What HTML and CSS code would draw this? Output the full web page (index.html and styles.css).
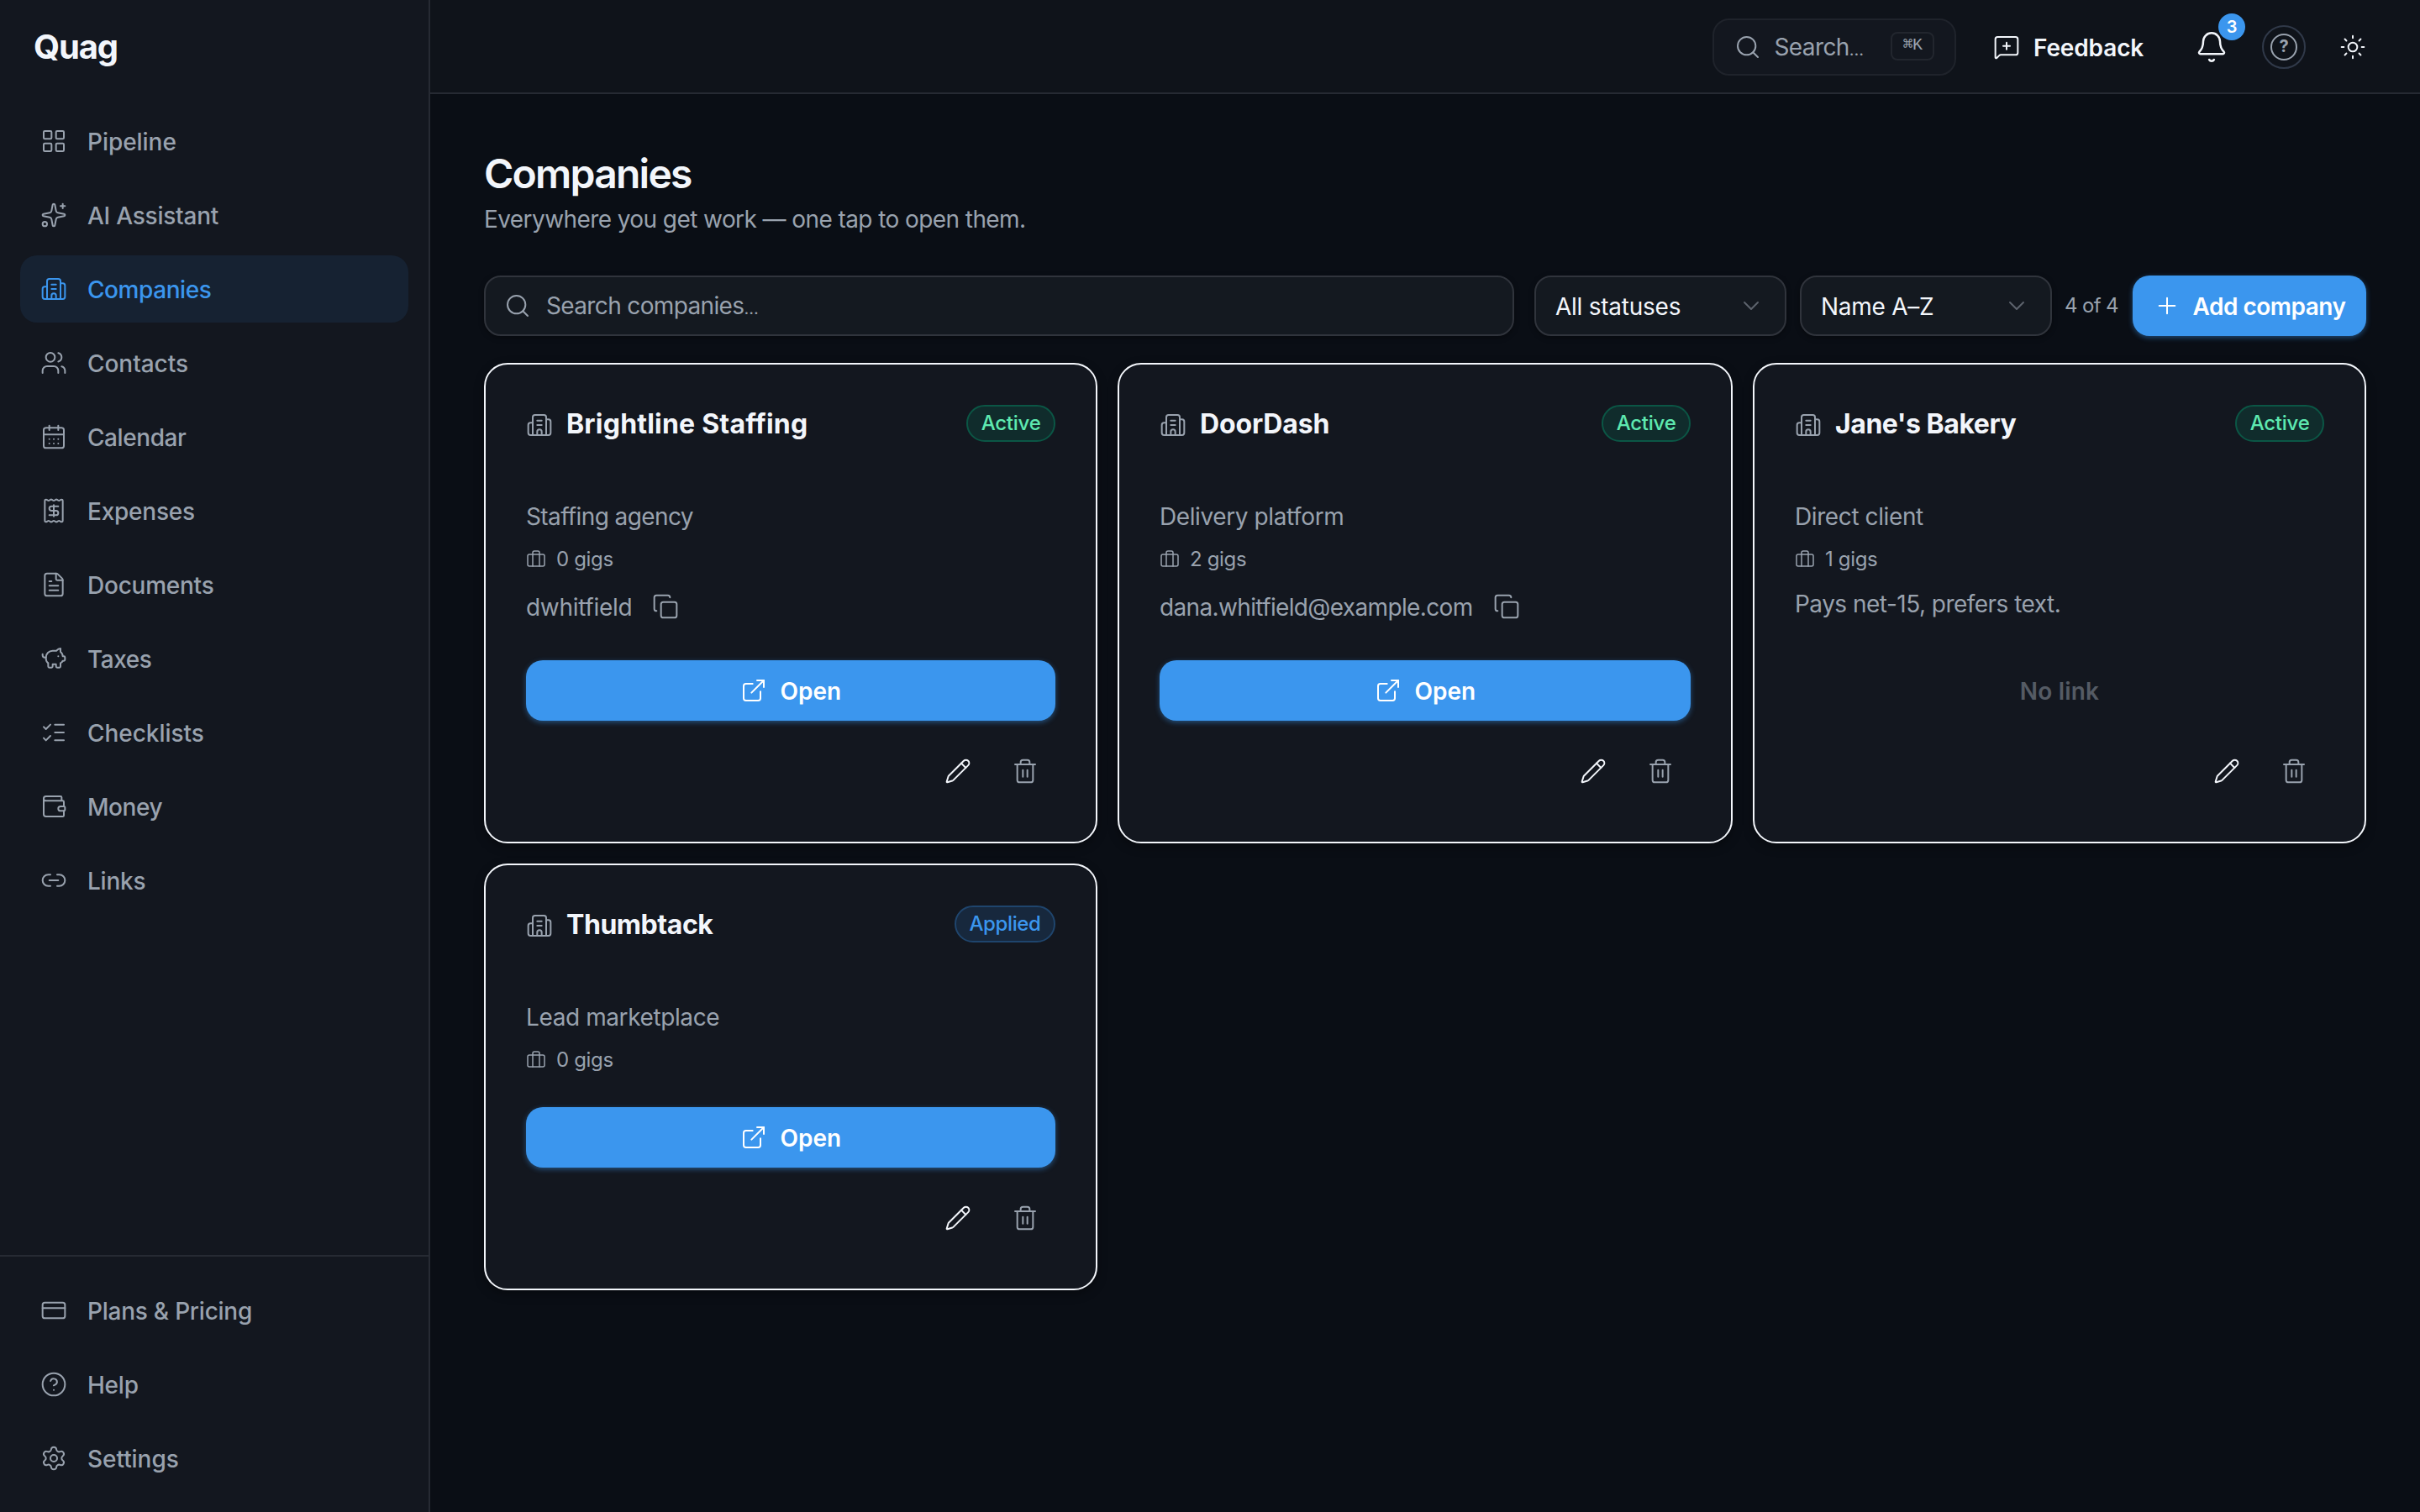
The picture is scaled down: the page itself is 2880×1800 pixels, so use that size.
FILE: index.html
```html
<!DOCTYPE html>
<html lang="en">
<head>
<meta charset="utf-8">
<title>Companies · Quag</title>
<link rel="stylesheet" href="styles.css">
</head>
<body>
<svg class="sprite" width="0" height="0" aria-hidden="true">
  <symbol id="grid" viewBox="0 0 24 24"><rect width="7" height="7" x="3" y="3" rx="1"/><rect width="7" height="7" x="14" y="3" rx="1"/><rect width="7" height="7" x="14" y="14" rx="1"/><rect width="7" height="7" x="3" y="14" rx="1"/></symbol>
  <symbol id="sparkles" viewBox="0 0 24 24"><path d="M11.017 2.814a1 1 0 0 1 1.966 0l1.051 5.558a2 2 0 0 0 1.594 1.594l5.558 1.051a1 1 0 0 1 0 1.966l-5.558 1.051a2 2 0 0 0-1.594 1.594l-1.051 5.558a1 1 0 0 1-1.966 0l-1.051-5.558a2 2 0 0 0-1.594-1.594l-5.558-1.051a1 1 0 0 1 0-1.966l5.558-1.051a2 2 0 0 0 1.594-1.594z"/><path d="M20 2v4"/><path d="M22 4h-4"/><circle cx="4" cy="20" r="2"/></symbol>
  <symbol id="building" viewBox="0 0 24 24"><path d="M10 12h4"/><path d="M10 8h4"/><path d="M14 21v-3a2 2 0 0 0-4 0v3"/><path d="M6 10H4a2 2 0 0 0-2 2v7a2 2 0 0 0 2 2h16a2 2 0 0 0 2-2V9a2 2 0 0 0-2-2h-2"/><path d="M6 21V5a2 2 0 0 1 2-2h8a2 2 0 0 1 2 2v16"/></symbol>
  <symbol id="users" viewBox="0 0 24 24"><path d="M16 21v-2a4 4 0 0 0-4-4H6a4 4 0 0 0-4 4v2"/><path d="M16 3.128a4 4 0 0 1 0 7.744"/><path d="M22 21v-2a4 4 0 0 0-3-3.87"/><circle cx="9" cy="7" r="4"/></symbol>
  <symbol id="calendar" viewBox="0 0 24 24"><path d="M8 2v4"/><path d="M16 2v4"/><rect width="18" height="18" x="3" y="4" rx="2"/><path d="M3 10h18"/><path d="M8 14h.01"/><path d="M12 14h.01"/><path d="M16 14h.01"/><path d="M8 18h.01"/><path d="M12 18h.01"/><path d="M16 18h.01"/></symbol>
  <symbol id="receipt" viewBox="0 0 24 24"><path d="M12 17V7"/><path d="M16 8h-6a2 2 0 0 0 0 4h4a2 2 0 0 1 0 4H8"/><path d="M4 3a1 1 0 0 1 1-1 1.3 1.3 0 0 1 .7.2l.933.6a1.3 1.3 0 0 0 1.4 0l.934-.6a1.3 1.3 0 0 1 1.4 0l.933.6a1.3 1.3 0 0 0 1.4 0l.933-.6a1.3 1.3 0 0 1 1.4 0l.934.6a1.3 1.3 0 0 0 1.4 0l.933-.6A1.3 1.3 0 0 1 19 2a1 1 0 0 1 1 1v18a1 1 0 0 1-1 1 1.3 1.3 0 0 1-.7-.2l-.933-.6a1.3 1.3 0 0 0-1.4 0l-.934.6a1.3 1.3 0 0 1-1.4 0l-.933-.6a1.3 1.3 0 0 0-1.4 0l-.933.6a1.3 1.3 0 0 1-1.4 0l-.934-.6a1.3 1.3 0 0 0-1.4 0l-.933.6a1.3 1.3 0 0 1-.7.2 1 1 0 0 1-1-1z"/></symbol>
  <symbol id="file" viewBox="0 0 24 24"><path d="M6 22a2 2 0 0 1-2-2V4a2 2 0 0 1 2-2h8a2.4 2.4 0 0 1 1.704.706l3.588 3.588A2.4 2.4 0 0 1 20 8v12a2 2 0 0 1-2 2z"/><path d="M14 2v5a1 1 0 0 0 1 1h5"/><path d="M10 9H8"/><path d="M16 13H8"/><path d="M16 17H8"/></symbol>
  <symbol id="piggy" viewBox="0 0 24 24"><path d="M11 17h3v2a1 1 0 0 0 1 1h2a1 1 0 0 0 1-1v-3a3.16 3.16 0 0 0 2-2h1a1 1 0 0 0 1-1v-2a1 1 0 0 0-1-1h-1a5 5 0 0 0-2-4V3a4 4 0 0 0-3.2 1.6l-.3.4H11a6 6 0 0 0-6 6v1a5 5 0 0 0 2 4v3a1 1 0 0 0 1 1h2a1 1 0 0 0 1-1z"/><path d="M16 10h.01"/><path d="M2 8v1a2 2 0 0 0 2 2h1"/></symbol>
  <symbol id="checks" viewBox="0 0 24 24"><path d="M13 5h8"/><path d="M13 12h8"/><path d="M13 19h8"/><path d="m3 17 2 2 4-4"/><path d="m3 7 2 2 4-4"/></symbol>
  <symbol id="wallet" viewBox="0 0 24 24"><path d="M19 7V4a1 1 0 0 0-1-1H5a2 2 0 0 0 0 4h15a1 1 0 0 1 1 1v4h-3a2 2 0 0 0 0 4h3a1 1 0 0 0 1-1v-2a1 1 0 0 0-1-1"/><path d="M3 5v14a2 2 0 0 0 2 2h15a1 1 0 0 0 1-1v-4"/></symbol>
  <symbol id="link" viewBox="0 0 24 24"><path d="M9 17H7A5 5 0 0 1 7 7h2"/><path d="M15 7h2a5 5 0 1 1 0 10h-2"/><path d="M8 12h8"/></symbol>
  <symbol id="card" viewBox="0 0 24 24"><rect width="20" height="14" x="2" y="5" rx="2"/><path d="M2 10h20"/></symbol>
  <symbol id="help" viewBox="0 0 24 24"><circle cx="12" cy="12" r="10"/><path d="M9.09 9a3 3 0 0 1 5.83 1c0 2-3 3-3 3"/><path d="M12 17h.01"/></symbol>
  <symbol id="gear" viewBox="0 0 24 24"><path d="M9.671 4.136a2.34 2.34 0 0 1 4.659 0 2.34 2.34 0 0 0 3.319 1.915 2.34 2.34 0 0 1 2.33 4.033 2.34 2.34 0 0 0 0 3.831 2.34 2.34 0 0 1-2.33 4.033 2.34 2.34 0 0 0-3.319 1.915 2.34 2.34 0 0 1-4.659 0 2.34 2.34 0 0 0-3.32-1.915 2.34 2.34 0 0 1-2.33-4.033 2.34 2.34 0 0 0 0-3.831A2.34 2.34 0 0 1 6.35 6.051a2.34 2.34 0 0 0 3.319-1.915"/><circle cx="12" cy="12" r="3"/></symbol>
  <symbol id="search" viewBox="0 0 24 24"><path d="m21 21-4.34-4.34"/><circle cx="11" cy="11" r="8"/></symbol>
  <symbol id="feedback" viewBox="0 0 24 24"><path d="M22 17a2 2 0 0 1-2 2H6.828a2 2 0 0 0-1.414.586l-2.202 2.202A.71.71 0 0 1 2 21.286V5a2 2 0 0 1 2-2h16a2 2 0 0 1 2 2z"/><path d="M12 8v6"/><path d="M9 11h6"/></symbol>
  <symbol id="bell" viewBox="0 0 24 24"><path d="M10.268 21a2 2 0 0 0 3.464 0"/><path d="M3.262 15.326A1 1 0 0 0 4 17h16a1 1 0 0 0 .74-1.673C19.41 13.956 18 12.499 18 8A6 6 0 0 0 6 8c0 4.499-1.411 5.956-2.738 7.326"/></symbol>
  <symbol id="sun" viewBox="0 0 24 24"><circle cx="12" cy="12" r="4"/><path d="M12 2v2"/><path d="M12 20v2"/><path d="m4.93 4.93 1.41 1.41"/><path d="m17.66 17.66 1.41 1.41"/><path d="M2 12h2"/><path d="M20 12h2"/><path d="m6.34 17.66-1.41 1.41"/><path d="m19.07 4.93-1.41 1.41"/></symbol>
  <symbol id="chevron" viewBox="0 0 24 24"><path d="m6 9 6 6 6-6"/></symbol>
  <symbol id="plus" viewBox="0 0 24 24"><path d="M5 12h14"/><path d="M12 5v14"/></symbol>
  <symbol id="briefcase" viewBox="0 0 24 24"><path d="M16 20V4a2 2 0 0 0-2-2h-4a2 2 0 0 0-2 2v16"/><rect width="20" height="14" x="2" y="6" rx="2"/></symbol>
  <symbol id="copy" viewBox="0 0 24 24"><rect width="14" height="14" x="8" y="8" rx="2"/><path d="M4 16c-1.1 0-2-.9-2-2V4c0-1.1.9-2 2-2h10c1.1 0 2 .9 2 2"/></symbol>
  <symbol id="external" viewBox="0 0 24 24"><path d="M15 3h6v6"/><path d="M10 14 21 3"/><path d="M18 13v6a2 2 0 0 1-2 2H5a2 2 0 0 1-2-2V8a2 2 0 0 1 2-2h6"/></symbol>
  <symbol id="pencil" viewBox="0 0 24 24"><path d="M21.174 6.812a1 1 0 0 0-3.986-3.987L3.842 16.174a2 2 0 0 0-.5.83l-1.321 4.352a.5.5 0 0 0 .623.622l4.353-1.32a2 2 0 0 0 .83-.497z"/><path d="m15 5 4 4"/></symbol>
  <symbol id="trash" viewBox="0 0 24 24"><path d="M10 11v6"/><path d="M14 11v6"/><path d="M19 6v14a2 2 0 0 1-2 2H7a2 2 0 0 1-2-2V6"/><path d="M3 6h18"/><path d="M8 6V4a2 2 0 0 1 2-2h4a2 2 0 0 1 2 2v2"/></symbol>
</svg>

<div class="app">
  <aside class="sidebar">
    <div class="brand">Quag</div>
    <nav class="nav">
      <a class="nav-item drop normal"><svg class="icon"><use href="#grid"/></svg>Pipeline</a>
      <a class="nav-item drop"><svg class="icon"><use href="#sparkles"/></svg>AI Assistant</a>
      <a class="nav-item drop tight active"><svg class="icon"><use href="#building"/></svg>Companies</a>
      <a class="nav-item drop normal"><svg class="icon"><use href="#users"/></svg>Contacts</a>
      <a class="nav-item drop tight"><svg class="icon"><use href="#calendar"/></svg>Calendar</a>
      <a class="nav-item drop"><svg class="icon"><use href="#receipt"/></svg>Expenses</a>
      <a class="nav-item drop"><svg class="icon"><use href="#file"/></svg>Documents</a>
      <a class="nav-item drop tight"><svg class="icon"><use href="#piggy"/></svg>Taxes</a>
      <a class="nav-item drop normal"><svg class="icon"><use href="#checks"/></svg>Checklists</a>
      <a class="nav-item drop tight"><svg class="icon"><use href="#wallet"/></svg>Money</a>
      <a class="nav-item drop"><svg class="icon"><use href="#link"/></svg>Links</a>
    </nav>
    <nav class="nav nav-footer">
      <a class="nav-item drop"><svg class="icon"><use href="#card"/></svg>Plans &amp; Pricing</a>
      <a class="nav-item drop"><svg class="icon"><use href="#help"/></svg>Help</a>
      <a class="nav-item drop normal"><svg class="icon"><use href="#gear"/></svg>Settings</a>
    </nav>
  </aside>

  <div class="page">
    <header class="topbar">
      <div class="quick-search drop"><svg class="icon"><use href="#search"/></svg><span>Search<span class="dots">…</span></span><kbd class="kbd">⌘K</kbd></div>
      <div class="feedback drop"><svg class="icon"><use href="#feedback"/></svg>Feedback</div>
      <div class="bell"><svg class="icon"><use href="#bell"/></svg><span class="count">3</span></div>
      <div class="help"><span class="help-mark">?</span></div>
      <div class="theme"><svg class="icon"><use href="#sun"/></svg></div>
    </header>

    <main class="content">
      <h1 class="title">Companies</h1>
      <p class="subtitle">Everywhere you get work — one tap to open them.</p>

      <div class="toolbar">
        <div class="field search drop"><svg class="icon"><use href="#search"/></svg><span>Search companies<span class="dots">…</span></span></div>
        <div class="field select drop"><span>All statuses</span><svg class="icon"><use href="#chevron"/></svg></div>
        <div class="field select drop"><span>Name A–Z</span><svg class="icon"><use href="#chevron"/></svg></div>
        <span class="result-count">4 of 4</span>
        <div class="button drop add"><svg class="icon"><use href="#plus"/></svg>Add company</div>
      </div>

      <div class="cards">
        <article class="card">
          <div class="card-head"><svg class="icon"><use href="#building"/></svg><h2 class="name wide">Brightline Staffing</h2><span class="badge">Active</span></div>
          <div class="card-body">
            <p class="text">Staffing agency</p>
            <div class="gigs"><svg class="icon"><use href="#briefcase"/></svg>0 gigs</div>
            <div class="login drop short"><span>dwhitfield</span><svg class="icon"><use href="#copy"/></svg></div>
          </div>
          <div class="button drop"><svg class="icon"><use href="#external"/></svg>Open</div>
          <div class="actions"><span class="action"><svg class="icon"><use href="#pencil"/></svg></span><span class="action muted"><svg class="icon"><use href="#trash"/></svg></span></div>
        </article>

        <article class="card">
          <div class="card-head"><svg class="icon"><use href="#building"/></svg><h2 class="name">DoorDash</h2><span class="badge">Active</span></div>
          <div class="card-body">
            <p class="text loose">Delivery platform</p>
            <div class="gigs"><svg class="icon"><use href="#briefcase"/></svg>2 gigs</div>
            <div class="login drop"><span>dana.whitfield@example.com</span><svg class="icon"><use href="#copy"/></svg></div>
          </div>
          <div class="button drop"><svg class="icon"><use href="#external"/></svg>Open</div>
          <div class="actions"><span class="action"><svg class="icon"><use href="#pencil"/></svg></span><span class="action muted"><svg class="icon"><use href="#trash"/></svg></span></div>
        </article>

        <article class="card">
          <div class="card-head"><svg class="icon"><use href="#building"/></svg><h2 class="name narrow">Jane's Bakery</h2><span class="badge">Active</span></div>
          <div class="card-body">
            <p class="text loose">Direct client</p>
            <div class="gigs"><svg class="icon"><use href="#briefcase"/></svg>1 gigs</div>
            <p class="text note">Pays net-15, prefers text.</p>
          </div>
          <div class="button drop disabled">No link</div>
          <div class="actions"><span class="action"><svg class="icon"><use href="#pencil"/></svg></span><span class="action muted"><svg class="icon"><use href="#trash"/></svg></span></div>
        </article>

        <article class="card">
          <div class="card-head"><svg class="icon"><use href="#building"/></svg><h2 class="name narrow">Thumbtack</h2><span class="badge applied">Applied</span></div>
          <div class="card-body">
            <p class="text loose">Lead marketplace</p>
            <div class="gigs"><svg class="icon"><use href="#briefcase"/></svg>0 gigs</div>
          </div>
          <div class="button drop"><svg class="icon"><use href="#external"/></svg>Open</div>
          <div class="actions"><span class="action"><svg class="icon"><use href="#pencil"/></svg></span><span class="action muted"><svg class="icon"><use href="#trash"/></svg></span></div>
        </article>
      </div>
    </main>
  </div>
</div>
</body>
</html>
```
FILE: styles.css
```css
:root {
  --bg: #0a0e15;
  --surface: #13171f;
  --line: #262a33;
  --field-line: #30343c;
  --text: #f3f6fb;
  --muted: #99a2ae;
  --accent: #3b96ee;
}

* { box-sizing: border-box; }

body {
  margin: 0;
  background: var(--bg);
  color: var(--text);
  font: 400 28px/40px Inter, "Liberation Sans", sans-serif;
}

h1, h2, p { margin: 0; }

.sprite { position: absolute; }

.icon {
  display: block;
  flex: none;
  width: 32px;
  height: 32px;
  fill: none;
  stroke: currentColor;
  stroke-width: 1.5;
  stroke-linecap: round;
  stroke-linejoin: round;
}

/* Optical alignment: the label sits one pixel below its icon's centre line */
.drop.drop { padding-top: 2px; }
.drop > .icon { margin-top: -2px; }

.app { display: flex; height: 1800px; }

/* Sidebar */
.sidebar {
  display: flex;
  flex-direction: column;
  flex: none;
  width: 512px;
  background: var(--surface);
  border-right: 2px solid var(--line);
}

.brand {
  height: 112px;
  padding-left: 40px;
  font-size: 40px;
  font-weight: 700;
  line-height: 112px;
  letter-spacing: -1.17px;
}

.nav {
  display: flex;
  flex-direction: column;
  gap: 8px;
  padding: 16px 24px;
}

.nav-footer {
  margin-top: auto;
  padding: 24px;
  border-top: 2px solid var(--line);
}

.nav-item {
  display: flex;
  align-items: center;
  gap: 24px;
  height: 80px;
  padding: 0 24px;
  border-radius: 20px;
  color: var(--muted);
  font-weight: 500;
  letter-spacing: -0.24px;
}

.nav-item.tight { letter-spacing: -0.43px; }
.nav-item.normal { letter-spacing: -0.05px; }
.nav-item.active { background: #162232; color: var(--accent); }

/* Top bar */
.page {
  display: flex;
  flex-direction: column;
  flex: 1;
  min-width: 0;
}

.topbar {
  display: flex;
  align-items: center;
  justify-content: flex-end;
  flex: none;
  height: 112px;
  padding: 2px 48px 0 0;
  background: #0f131a;
  border-bottom: 2px solid var(--line);
}

.quick-search {
  display: flex;
  align-items: center;
  gap: 15.5px;
  width: 290px;
  height: 68px;
  padding: 0 24px;
  background: var(--surface);
  border: 2px solid #1f232b;
  border-radius: 20px;
  color: var(--muted);
  letter-spacing: -0.6px;
}

.dots { font-size: 20px; letter-spacing: 0; }

.kbd {
  width: 52px;
  height: 34px;
  margin: -4px 0 0 auto;
  border: 2px solid #22262e;
  border-radius: 8px;
  font: 20px/27px "Liberation Mono", "DejaVu Sans Mono", monospace;
  letter-spacing: -0.5px;
  text-align: center;
}

.feedback {
  display: flex;
  align-items: center;
  gap: 16px;
  width: 228px;
  height: 64px;
  margin-left: 20px;
  padding-left: 24px;
  font-weight: 600;
  letter-spacing: -0.14px;
}

.bell {
  position: relative;
  display: grid;
  place-items: center;
  width: 64px;
  height: 64px;
  margin-left: 24px;
}

.bell .icon { width: 40px; height: 40px; }

.count {
  position: absolute;
  top: -8px;
  right: -8px;
  width: 32px;
  height: 32px;
  border-radius: 16px;
  background: var(--accent);
  color: #fff;
  font-size: 20px;
  font-weight: 600;
  line-height: 33px;
  text-align: center;
}

.help {
  display: grid;
  place-items: center;
  width: 52px;
  height: 52px;
  margin-left: 28px;
  border: 2px solid #303949;
  border-radius: 50%;
}

.help-mark {
  width: 32px;
  height: 32px;
  border: 2px solid var(--muted);
  border-radius: 50%;
  color: var(--muted);
  font-size: 20px;
  font-weight: 700;
  line-height: 27px;
  text-align: center;
}

.theme {
  display: grid;
  place-items: center;
  width: 64px;
  height: 64px;
  margin-left: 24px;
}

/* Content */
.content { padding: 64px; }

.title {
  margin-bottom: 3px;
  font-size: 48px;
  font-weight: 600;
  line-height: 62px;
  letter-spacing: -1.76px;
}

.subtitle { color: var(--muted); letter-spacing: -0.58px; }

.toolbar {
  display: flex;
  align-items: center;
  gap: 16px;
  margin: 47px 0 32px;
}

.field {
  display: flex;
  align-items: center;
  height: 72px;
  padding: 0 24px;
  background: #141920;
  border: 2px solid var(--field-line);
  border-radius: 20px;
  box-shadow: 0 2px 6px rgba(0, 0, 0, 0.35);
}

.search {
  flex: 1;
  gap: 18px;
  margin-right: 8px;
  padding-left: 22px;
  color: var(--muted);
  letter-spacing: -0.64px;
}

.select {
  justify-content: space-between;
  width: 300px;
  padding-left: 23px;
  letter-spacing: -0.25px;
}

.select .icon { color: #5d636d; }

.result-count {
  width: 65px;
  margin-left: -1px;
  color: var(--muted);
  font-size: 24px;
  letter-spacing: -0.66px;
  white-space: nowrap;
}

.button {
  display: flex;
  align-items: center;
  justify-content: center;
  gap: 15.5px;
  height: 72px;
  border-radius: 20px;
  background: var(--accent);
  box-shadow: 0 2px 6px rgba(59, 150, 238, 0.45);
  color: #fff;
  font-weight: 600;
}

.button.add { width: 278px; gap: 15px; letter-spacing: -0.5px; }

.button.disabled {
  background: none;
  box-shadow: none;
  color: #555b64;
  letter-spacing: 0.2px;
}

/* Company cards */
.cards {
  display: grid;
  grid-template-columns: 730fr 732fr 730fr;
  gap: 24px;
}

.card {
  display: flex;
  flex-direction: column;
  padding: 48px;
  background: var(--surface);
  border: 2px solid var(--text);
  border-radius: 28px;
  box-shadow: 0 4px 12px rgba(0, 0, 0, 0.35);
}

.card-head {
  display: flex;
  align-items: center;
  gap: 16px;
  height: 44px;
  margin-bottom: 68px;
}

.card-head .icon { margin-top: 4px; color: var(--muted); }

.name {
  padding-top: 2px;
  font-size: 32px;
  font-weight: 700;
  line-height: 44px;
  letter-spacing: -0.15px;
}

.name.wide { letter-spacing: 0.2px; }
.name.narrow { letter-spacing: -0.45px; }

.badge {
  height: 44px;
  margin-left: auto;
  padding: 0 15.5px;
  background: #102c2c;
  border: 2px solid #0b5645;
  border-radius: 22px;
  color: #5ee9b0;
  font-size: 24px;
  font-weight: 500;
  line-height: 39px;
  letter-spacing: -0.25px;
}

.badge.applied {
  background: #17283d;
  border-color: #1f456d;
  color: var(--accent);
  letter-spacing: -0.38px;
}

.card-body {
  display: flex;
  flex-direction: column;
  flex: 1;
  gap: 16px;
  margin-bottom: 40px;
  color: var(--muted);
}

.text { margin: 1px 0 -1px; letter-spacing: -0.6px; }
.text.loose { letter-spacing: -0.4px; }
.text.note { letter-spacing: -0.52px; }

.gigs {
  display: flex;
  align-items: center;
  gap: 12px;
  font-size: 24px;
  line-height: 32px;
  letter-spacing: -0.35px;
}

.gigs .icon { width: 24px; height: 24px; }

.login {
  display: flex;
  align-items: center;
  gap: 24px;
  height: 48px;
  letter-spacing: -0.64px;
}

.login.short { letter-spacing: -0.3px; }

.actions {
  display: flex;
  justify-content: flex-end;
  gap: 8px;
  margin-top: 24px;
}

.action {
  display: grid;
  place-items: center;
  width: 72px;
  height: 72px;
}

.action.muted { color: var(--muted); }
```
